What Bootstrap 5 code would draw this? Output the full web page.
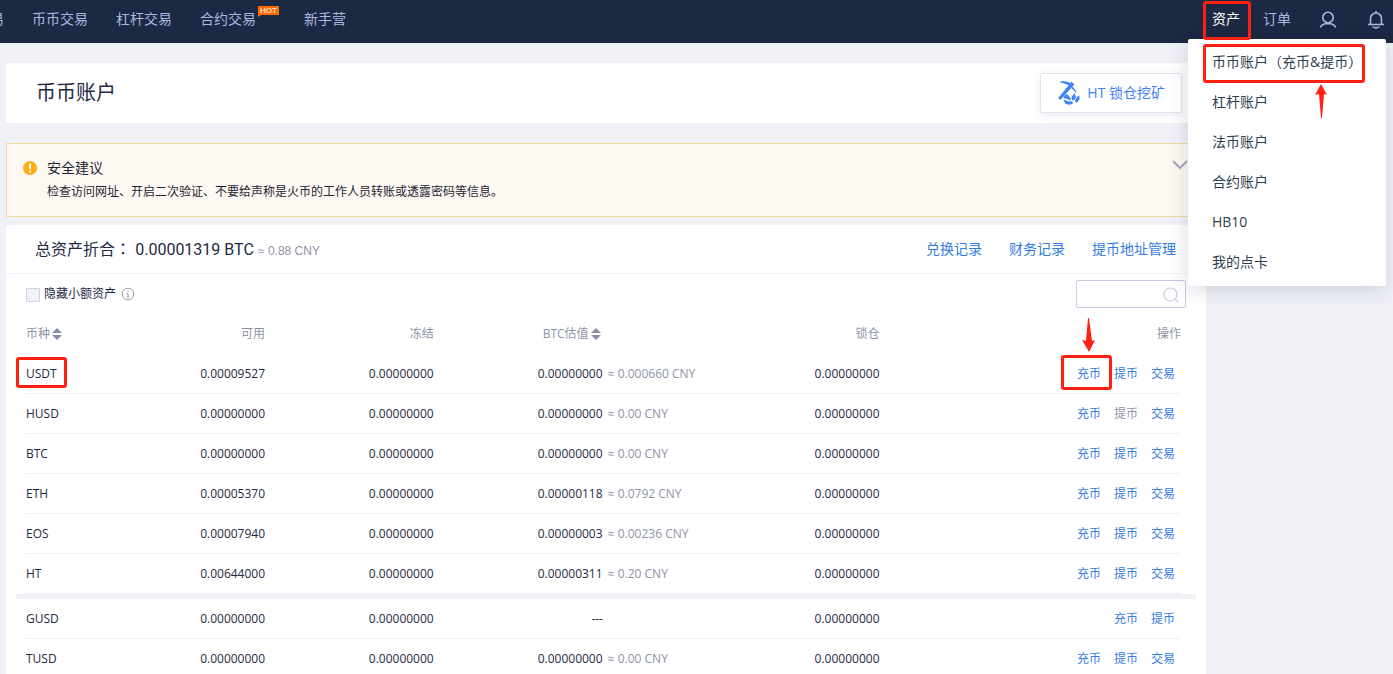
<!DOCTYPE html>
<html lang="zh-CN">
<head>
<meta charset="utf-8">
<meta name="viewport" content="width=device-width, initial-scale=1">
<title>币币账户</title>
<link href="https://cdn.jsdelivr.net/npm/bootstrap@5.3.0/dist/css/bootstrap.min.css" rel="stylesheet">
<style>
:root{--ink:#1f2a44;--muted-ink:#8f93a8;--link:#357ce1;--mark-red:#ff2012}
body{height:100vh;overflow:hidden;background:#f0f1f7;color:var(--ink);font:400 12px/20px "Open Sans","Noto Sans CJK SC",sans-serif}
a{color:var(--link);text-decoration:none}
.mid-punct{font-family:"Noto Sans CJK TC",sans-serif;line-height:1}
.top-bar{height:43px;background:#1c2942;padding:9px 8px 0 0;font-size:14px;line-height:20px}
.top-bar .nav-link{color:#a9b9e0;padding:0}
.top-bar .nav-link.active{color:#fff}
.main-nav{gap:28px}
.cut-item{width:4px;overflow:hidden;justify-content:flex-end}
.user-nav{gap:28px}
.assets-item{margin-right:-5px}
.hot-tag{position:absolute;left:100%;top:-3px;margin-left:2px;padding:0 2px;background:#ff6a00;color:#fff;font:8px/9px "Liberation Sans",sans-serif}
.hot-tag::after{content:"";position:absolute;left:0;top:100%;border-top:2px solid #ff6a00;border-right:3px solid transparent}
.asset-menu{left:-24px;top:30px;width:198px;padding:3px 0 4px;border:0;border-radius:2px;box-shadow:0 4px 20px rgba(30,40,80,.16);z-index:20}
.asset-menu .dropdown-item{padding:0 24px;font-size:14px;line-height:40px;color:#30404f}
.frame-box{position:absolute;border:3px solid var(--mark-red);border-radius:3px;pointer-events:none;z-index:30}
.frame-nav{inset:-8px -11px -11px -9px}
.frame-menu{inset:2px 21px -1px 15px}
.frame-coin{inset:-8px -10px -6px -10px}
.frame-deposit{inset:-9px -11px -6px -16px}
.pointer{position:absolute;z-index:30;pointer-events:none}
.pointer-up{left:127px;top:42px}
.pointer-down{left:5px;top:-46px}
.page-main{max-width:1206px;padding-left:6px}
.panel{background:#fff;border-radius:3px}
.title-panel{margin-top:20px;height:60px;padding:0 24px 0 30px}
.title-panel h1{font-size:20px;line-height:28px;font-weight:400;margin:0}
.mine-btn{height:40px;padding:0 16px;border:1px solid #dfe2ec;border-radius:2px;background:#fff;color:#3f80f5;font-size:14px;line-height:20px;gap:7px;box-shadow:0 2px 8px rgba(60,80,140,.1)}
.notice{margin-top:20px;padding:14px 16px 12px;border:1px solid #f3d9a0;background:#fdf8f1;color:#1f2533}
.notice-mark{margin:3px 10px 0 0}
.notice h2{font-size:14px;line-height:20px;font-weight:400;margin:0 0 2px}
.notice p{line-height:24px;margin:0}
.assets-panel{margin-top:8px}
.assets-head{height:49px;padding:0 30px 0 29px;border-bottom:1px solid #eff0f3}
.assets-head nav{gap:27px;font-size:14px}
.total-line{font-size:16px;line-height:24px}
.total-num{font-family:Roboto,sans-serif}
.total-cny{font:12px "Liberation Sans",sans-serif;color:var(--muted-ink)}
.filter-row{height:40px;padding:0 20px}
.form-check-input.hide-small{width:14px;height:14px;margin:2px 0 0;border-radius:1px;border-color:#d0d3e2;background-color:#f1f2f8}
.info-mark{margin-left:5px}
.coin-search{width:110px}
.coin-search .form-control{height:28px;padding:0 26px 0 8px;border-color:#c9cce0;border-radius:2px;font-size:12px}
.coin-search svg{position:absolute;right:7px;top:7px}
.coin-wrap{padding:0 25px 0 20px}
.coin-table{table-layout:fixed;width:100%;border-collapse:separate;border-spacing:0}
.coin-table td,.coin-table th{height:40px;padding:0;font-weight:400}
.coin-table td{border-bottom:1px solid #eff0f3}
.coin-table th,.soft{color:var(--muted-ink)}
.soft{margin-left:2px}
.coin-table .val-col{padding-left:104px}
.coin-table th.val-col{padding-left:109px}
.no-value{display:block;width:119px;text-align:center}
.row-actions{display:flex;justify-content:flex-end;gap:13px;padding-right:6px}
.row-actions .off{color:var(--muted-ink)}
.coin-table .split-row td{height:5px;border:0;position:relative}
.split-row td::before{content:"";position:absolute;inset:0 -15px 0 -10px;background:#f1f2f5}
.sort-btn{border:0;padding:0;background:none;color:inherit;display:inline-flex;align-items:center;gap:1px}
</style>
</head>
<body>
<header class="top-bar d-flex justify-content-between align-items-start">
  <ul class="nav main-nav flex-nowrap">
    <li class="nav-item cut-item d-flex text-nowrap"><a class="nav-link" href="#">易</a></li>
    <li class="nav-item"><a class="nav-link" href="#">币币交易</a></li>
    <li class="nav-item"><a class="nav-link" href="#">杠杆交易</a></li>
    <li class="nav-item position-relative"><a class="nav-link" href="#">合约交易</a><span class="hot-tag">HOT</span></li>
    <li class="nav-item ps-3"><a class="nav-link ms-1" href="#">新手营</a></li>
  </ul>
  <ul class="nav user-nav flex-nowrap align-items-start">
    <li class="nav-item assets-item position-relative">
      <a class="nav-link active" href="#">资产</a><span class="frame-box frame-nav"></span>
      <div class="dropdown-menu asset-menu show">
        <div class="position-relative">
          <a class="dropdown-item" href="#">币币账户<span class="mid-punct" lang="zh-TW">（</span>充币&amp;提币<span class="mid-punct" lang="zh-TW">）</span></a><span class="frame-box frame-menu"></span>
          <svg class="pointer pointer-up" width="12" height="34" viewBox="0 0 12 34"><path d="M6 0l6 11-3-1-2 24H6L4 10l-4 1z" fill="#ff2012"/></svg>
        </div>
        <a class="dropdown-item" href="#">杠杆账户</a>
        <a class="dropdown-item" href="#">法币账户</a>
        <a class="dropdown-item" href="#">合约账户</a>
        <a class="dropdown-item" href="#">HB10</a>
        <a class="dropdown-item" href="#">我的点卡</a>
      </div>
    </li>
    <li class="nav-item"><a class="nav-link" href="#">订单</a></li>
    <li class="nav-item"><a class="nav-link" href="#" aria-label="账号"><svg class="d-block" width="20" height="20" viewBox="0 0 20 20" fill="none" stroke="#a9b9e0" stroke-width="1.600"><circle cx="9" cy="8.500" r="5.200"/><path d="M1.300 18.500q1.500-3.300 5-3.700h5.400q3.500.4 5 3.700"/></svg></a></li>
    <li class="nav-item"><a class="nav-link" href="#" aria-label="通知"><svg class="d-block" width="18" height="20" viewBox="0 0 18 20" fill="none" stroke="#a9b9e0" stroke-width="1.600"><path d="M9 2v2.500M3.500 15V9.500a5.500 5.500 0 0 1 11 0V15M1 15.500h16M5.500 17.500q3.500 2.800 7 0"/></svg></a></li>
  </ul>
</header>

<main class="page-main">
  <section class="panel title-panel d-flex align-items-center justify-content-between">
    <h1>币币账户</h1>
    <button type="button" class="mine-btn d-flex align-items-center">
      <svg width="23" height="24" viewBox="0 0 23 24" fill="#4285f5"><path d="M3.500.8C8-.4 12.500 1 15.300 3.600l-1.800 2C10.500 3.200 7.500 2 3.500 1.700z"/><path d="M14.500.8l3 2.800L4 18.300c-1 1-3.300-.6-2.400-1.700z"/><path d="M15.200 5.300c3 2.900 4.400 5.700 4.800 8-1.500-2.300-3.300-4.300-6.300-6.500z"/><path d="M7 15l3-2 3.500 4 .3 2.500-3.800-1.500L6.500 17zM14.500 16l3-4 1.500 4.200-1.700 2.800-2.300.3zM20 15.800l2.500-1.300v4l-3 3.500-1.500-2.300zM6.300 18.300l4.500 2 4.700.2.500 2-3 1.200-4.500-.6z"/></svg>
      <span>HT 锁仓挖矿</span>
    </button>
  </section>

  <section class="notice d-flex">
    <svg class="flex-shrink-0 notice-mark" width="14" height="14" viewBox="0 0 14 14"><circle cx="7" cy="7" r="7" fill="#fdae17"/><path d="M7 2.500v5.500M7 9.500v2" stroke="#fff" stroke-width="2"/></svg>
    <div class="flex-grow-1">
      <h2>安全建议</h2>
      <p>检查访问网址、开启二次验证、不要给声称是火币的工作人员转账或透露密码等信息。</p>
    </div>
    <svg width="16" height="14" viewBox="0 0 16 14" fill="none" stroke="#a3a9bd" stroke-width="2"><path d="M0 3l7 7 7-7"/></svg>
  </section>

  <section class="panel assets-panel">
    <div class="assets-head d-flex align-items-center justify-content-between">
      <div class="total-line">总资产折合<span class="mid-punct" lang="zh-TW">：</span> <span class="total-num">0.00001319 BTC</span> <span class="total-cny">≈ 0.88 CNY</span></div>
      <nav class="d-flex"><a href="#">兑换记录</a><a href="#">财务记录</a><a href="#">提币地址管理</a></nav>
    </div>
    <div class="filter-row d-flex align-items-center justify-content-between">
      <div class="d-flex align-items-center">
        <input class="form-check-input hide-small" type="checkbox" id="hideSmall">
        <label class="ms-1" for="hideSmall">隐藏小额资产</label>
        <svg class="info-mark" width="14" height="14" viewBox="0 0 14 14" fill="none" stroke="#989bb0"><circle cx="7" cy="7" r="5.800"/><path d="M7 3.500v1.500M5.500 6.500h1.500v3.500M5.500 10h3"/></svg>
      </div>
      <div class="coin-search position-relative">
        <input class="form-control" type="text" aria-label="搜索币种">
        <svg width="16" height="16" viewBox="0 0 16 16" fill="none" stroke="#c9cce0" stroke-width="1.200"><circle cx="7.500" cy="7.500" r="6.500"/><path d="M12 12l3 3"/></svg>
      </div>
    </div>
    <div class="coin-wrap">
      <table class="coin-table">
        <colgroup><col style="width:10.4%"><col style="width:10.3%"><col style="width:14.6%"><col style="width:26.3%"><col style="width:12.3%"><col></colgroup>
        <thead>
          <tr>
            <th scope="col"><button type="button" class="sort-btn">币种<svg width="12" height="12" viewBox="0 0 12 12" fill="#8a8ea6"><path d="M6 0l5 5H1zM1 7h10l-5 5z"/></svg></button></th>
            <th scope="col" class="text-end">可用</th>
            <th scope="col" class="text-end">冻结</th>
            <th scope="col" class="val-col"><button type="button" class="sort-btn">BTC估值<svg width="12" height="12" viewBox="0 0 12 12" fill="#8a8ea6"><path d="M6 0l5 5H1zM1 7h10l-5 5z"/></svg></button></th>
            <th scope="col" class="text-end">锁仓</th>
            <th scope="col" class="text-end">操作</th>
          </tr>
        </thead>
        <tbody>
          <tr><td><span class="position-relative">USDT<span class="frame-box frame-coin"></span></span></td><td class="text-end">0.00009527</td><td class="text-end">0.00000000</td><td class="val-col">0.00000000 <span class="soft">≈ 0.000660 CNY</span></td><td class="text-end">0.00000000</td><td><div class="row-actions"><span class="position-relative"><a href="#">充币</a><span class="frame-box frame-deposit"></span><svg class="pointer pointer-down" width="14" height="34" viewBox="0 0 14 34"><path d="M6 0h1l3 23 3-1-6 12-7-12 4 1z" fill="#ff2012"/></svg></span><a href="#">提币</a><a href="#">交易</a></div></td></tr>
          <tr><td>HUSD</td><td class="text-end">0.00000000</td><td class="text-end">0.00000000</td><td class="val-col">0.00000000 <span class="soft">≈ 0.00 CNY</span></td><td class="text-end">0.00000000</td><td><div class="row-actions"><a href="#">充币</a><a href="#" class="off">提币</a><a href="#">交易</a></div></td></tr>
          <tr><td>BTC</td><td class="text-end">0.00000000</td><td class="text-end">0.00000000</td><td class="val-col">0.00000000 <span class="soft">≈ 0.00 CNY</span></td><td class="text-end">0.00000000</td><td><div class="row-actions"><a href="#">充币</a><a href="#">提币</a><a href="#">交易</a></div></td></tr>
          <tr><td>ETH</td><td class="text-end">0.00005370</td><td class="text-end">0.00000000</td><td class="val-col">0.00000118 <span class="soft">≈ 0.0792 CNY</span></td><td class="text-end">0.00000000</td><td><div class="row-actions"><a href="#">充币</a><a href="#">提币</a><a href="#">交易</a></div></td></tr>
          <tr><td>EOS</td><td class="text-end">0.00007940</td><td class="text-end">0.00000000</td><td class="val-col">0.00000003 <span class="soft">≈ 0.00236 CNY</span></td><td class="text-end">0.00000000</td><td><div class="row-actions"><a href="#">充币</a><a href="#">提币</a><a href="#">交易</a></div></td></tr>
          <tr><td>HT</td><td class="text-end">0.00644000</td><td class="text-end">0.00000000</td><td class="val-col">0.00000311 <span class="soft">≈ 0.20 CNY</span></td><td class="text-end">0.00000000</td><td><div class="row-actions"><a href="#">充币</a><a href="#">提币</a><a href="#">交易</a></div></td></tr>
          <tr class="split-row"><td colspan="6"></td></tr>
          <tr><td>GUSD</td><td class="text-end">0.00000000</td><td class="text-end">0.00000000</td><td class="val-col"><span class="no-value">---</span></td><td class="text-end">0.00000000</td><td><div class="row-actions"><a href="#">充币</a><a href="#">提币</a></div></td></tr>
          <tr><td>TUSD</td><td class="text-end">0.00000000</td><td class="text-end">0.00000000</td><td class="val-col">0.00000000 <span class="soft">≈ 0.00 CNY</span></td><td class="text-end">0.00000000</td><td><div class="row-actions"><a href="#">充币</a><a href="#">提币</a><a href="#">交易</a></div></td></tr>
        </tbody>
      </table>
    </div>
  </section>
</main>
<script src="https://cdn.jsdelivr.net/npm/bootstrap@5.3.0/dist/js/bootstrap.bundle.min.js"></script>
</body>
</html>
